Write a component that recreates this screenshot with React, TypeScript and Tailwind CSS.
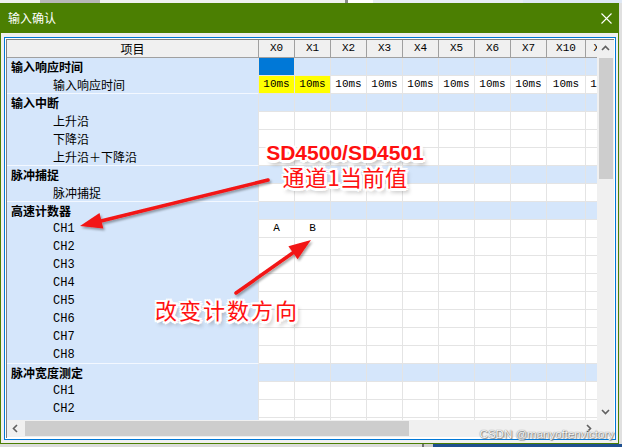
import React from 'react'

type Row = { label: string; cat?: boolean; sel?: boolean; ms?: boolean; ab?: boolean }

const ROWS: Row[] = [
  { label: '输入响应时间', cat: true, sel: true },
  { label: '输入响应时间', ms: true },
  { label: '输入中断', cat: true },
  { label: '上升沿' },
  { label: '下降沿' },
  { label: '上升沿＋下降沿' },
  { label: '脉冲捕捉', cat: true },
  { label: '脉冲捕捉' },
  { label: '高速计数器', cat: true },
  { label: 'CH1', ab: true },
  { label: 'CH2' },
  { label: 'CH3' },
  { label: 'CH4' },
  { label: 'CH5' },
  { label: 'CH6' },
  { label: 'CH7' },
  { label: 'CH8' },
  { label: '脉冲宽度测定', cat: true },
  { label: 'CH1' },
  { label: 'CH2' },
  { label: 'CH3' },
]

const COLS = ['X0', 'X1', 'X2', 'X3', 'X4', 'X5', 'X6', 'X7', 'X10', 'X11']

const CJK = "font-['Noto_Sans_CJK_SC',sans-serif]"
const MONO = "font-['Liberation_Mono','Noto_Sans_CJK_SC',monospace]"
const HALO =
  '[text-shadow:-2px_-2px_0_#fff,0_-2px_0_#fff,2px_-2px_0_#fff,2px_0_0_#fff,2px_2px_0_#fff,0_2px_0_#fff,-2px_2px_0_#fff,-2px_0_0_#fff,0_3px_0_#fff,3px_0_0_#fff,3px_4px_4px_rgba(0,0,0,0.4)]'

function Chevron({ dir }: { dir: 'up' | 'down' | 'left' | 'right' }) {
  const pts = {
    up: '1,6 4.5,2.5 8,6',
    down: '1,3 4.5,6.5 8,3',
    left: '6,1 2.5,4.5 6,8',
    right: '3,1 6.5,4.5 3,8',
  }[dir]
  return (
    <svg width="9" height="9" viewBox="0 0 9 9">
      <polyline points={pts} fill="none" stroke="#606060" strokeWidth="1.6" />
    </svg>
  )
}

function DataCell({ i, row }: { i: number; row: Row }) {
  const w = i === 8 ? 'w-[39px]' : 'w-[36px]'
  let bg = 'bg-white'
  if (row.cat) bg = 'bg-[#d5e6fb]'
  if (row.sel && i === 0) bg = 'bg-[#0078d7]'
  if (row.ms && i < 2) bg = 'bg-[#ffff00]'
  let txt = ''
  if (row.ms) txt = '10ms'
  if (row.ab && i === 0) txt = 'A'
  if (row.ab && i === 1) txt = 'B'
  return (
    <div className={`${w} ${bg} shrink-0 border-r border-b border-[#e4e4e4] flex items-center justify-center text-[11px] text-black ${MONO}`}>
      {txt}
    </div>
  )
}

export default function App() {
  return (
    <div className="relative w-[622px] h-[447px] overflow-hidden bg-[#e4e4e4] flex flex-col">
      {/* background window peeking out */}
      <div className="h-[3px] flex shrink-0">
        <div className="w-[40px] bg-[#f0f0f0]" />
        <div className="w-[60px] bg-[#b8b8b8]" />
        <div className="w-[245px] bg-[#f0f0f0]" />
        <div className="w-[3px] bg-[#8a8a8a]" />
        <div className="w-[25px] bg-white" />
        <div className="w-[150px] bg-[#e8edf5]" />
        <div className="flex-1 bg-[#dfe8f5]" />
      </div>

      <div className="flex h-[441px] shrink-0">
        {/* dialog */}
        <div className="w-[619px] shrink-0 flex flex-col border-l border-r border-b border-[#4b7f02]">
          <div className="h-[30px] shrink-0 bg-[#4b7f02] flex items-center justify-between pl-[7px] pr-[6px]">
            <span className={`text-white text-[12px] ${CJK}`}>输入确认</span>
            <svg width="11" height="11" viewBox="0 0 11 11">
              <path d="M0.5 0.5 L10.5 10.5 M10.5 0.5 L0.5 10.5" stroke="#fff" strokeWidth="1.1" />
            </svg>
          </div>

          <div className="flex-1 bg-[#f0f0f0] pt-[4px] pl-[3px] pr-[2px] pb-[3px]">
            <div className="h-full border border-[#0078d7] bg-white p-[1px]">
              <div className="h-full border-l border-t border-[#7f7f7f] flex flex-col">
                <div className="h-[380px] shrink-0 flex">
                  {/* table */}
                  <div className="w-[590px] shrink-0 overflow-hidden flex flex-col">
                    <div className="h-[18px] shrink-0 flex bg-[#f0f0f0] border-b border-[#a0a0a0]">
                      <div className={`w-[252px] shrink-0 border-r border-[#a0a0a0] flex items-center justify-center text-[12px] text-black ${CJK}`}>
                        项目
                      </div>
                      {COLS.map((c, i) => (
                        <div
                          key={c}
                          className={`${i === 8 ? 'w-[39px]' : 'w-[36px]'} shrink-0 border-r border-[#a0a0a0] flex items-center justify-center text-[11px] text-black ${MONO}`}
                        >
                          {c}
                        </div>
                      ))}
                    </div>
                    {ROWS.map((r, ri) => {
                      const nextCat = ROWS[ri + 1]?.cat
                      return (
                        <div key={ri} className="h-[18px] shrink-0 flex">
                          <div
                            className={`w-[252px] shrink-0 bg-[#d5e6fb] border-r border-[#e4e4e4] flex items-center text-[12px] text-black ${
                              r.cat ? 'pl-[4px] font-bold' : 'pl-[46px]'
                            } ${nextCat ? 'border-b border-b-[#f3f8ff]' : ''} ${
                              r.label.startsWith('CH') ? `${MONO} text-[11px]` : CJK
                            }`}
                          >
                            {r.label}
                          </div>
                          {COLS.map((c, i) => (
                            <DataCell key={c} i={i} row={r} />
                          ))}
                        </div>
                      )
                    })}
                  </div>

                  {/* vertical scrollbar */}
                  <div className="w-[17px] shrink-0 bg-[#f0f0f0] flex flex-col">
                    <div className="h-[17px] shrink-0 flex items-center justify-center">
                      <Chevron dir="up" />
                    </div>
                    <div className="flex-1">
                      <div className="mt-[1px] ml-[2px] mr-[1px] h-[121px] bg-[#cdcdcd]" />
                    </div>
                    <div className="h-[17px] shrink-0 flex items-center justify-center">
                      <Chevron dir="down" />
                    </div>
                  </div>
                </div>

                {/* horizontal scrollbar */}
                <div className="h-[17px] shrink-0 flex bg-[#f0f0f0]">
                  <div className="w-[17px] shrink-0 flex items-center justify-center">
                    <Chevron dir="left" />
                  </div>
                  <div className="w-[384px] shrink-0 ml-[1px] my-[1px] bg-[#cdcdcd]" />
                  <div className="flex-1" />
                  <div className="w-[17px] shrink-0 flex items-center justify-center">
                    <Chevron dir="right" />
                  </div>
                  <div className="w-[17px] shrink-0 bg-[#f0f0f0]" />
                </div>
              </div>
            </div>
          </div>
        </div>
        <div className="flex-1 bg-[#e0e0e0]" />
      </div>

      <div className="h-[3px] shrink-0 flex">
        <div className="w-[422px] bg-[#dcdcdc]" />
        <div className="w-[2px] bg-[#707070]" />
        <div className="w-[9px] bg-[#cfcfcf]" />
        <div className="flex-1 bg-[#1f4f8f]" />
      </div>

      {/* annotations */}
      <svg className="absolute left-0 top-0 pointer-events-none" width="622" height="447">
        <defs>
          <filter id="sh" x="-20%" y="-20%" width="140%" height="160%">
            <feDropShadow dx="1.5" dy="2" stdDeviation="1.2" floodColor="#000" floodOpacity="0.35" />
          </filter>
        </defs>
        <g filter="url(#sh)">
          <line x1="268" y1="180" x2="101" y2="221" stroke="#f21414" strokeWidth="3.5" strokeLinecap="round" />
          <polygon points="80,226 103.3,228.6 99.5,213" fill="#f21414" />
          <line x1="236" y1="293" x2="293" y2="252.7" stroke="#f21414" strokeWidth="3.5" strokeLinecap="round" />
          <polygon points="311,240 297.6,259.2 288.4,246.2" fill="#f21414" />
        </g>
      </svg>

      <div className="absolute left-[255px] top-[142px] w-[180px] flex flex-col items-center">
        <div className={`text-[21px] leading-none font-bold text-[#ff1010] font-['Liberation_Sans',sans-serif] ${HALO}`}>
          SD4500/SD4501
        </div>
        <div className={`mt-[2px] text-[22px] leading-none tracking-[0.5px] text-[#ff1010] ${CJK} ${HALO}`}>通道1当前值</div>
      </div>

      <div className={`absolute left-[155px] top-[298px] text-[22px] leading-none tracking-[2px] text-[#ff1010] ${CJK} ${HALO}`}>
        改变计数方向
      </div>

      <div className="absolute right-[8px] top-[429px] text-[11.5px] leading-none text-[#f8f8f8] font-['Liberation_Sans',sans-serif] [text-shadow:0_0_1px_#555,1px_1px_1px_#888]">
        CSDN @manyoftenvictory
      </div>
    </div>
  )
}
